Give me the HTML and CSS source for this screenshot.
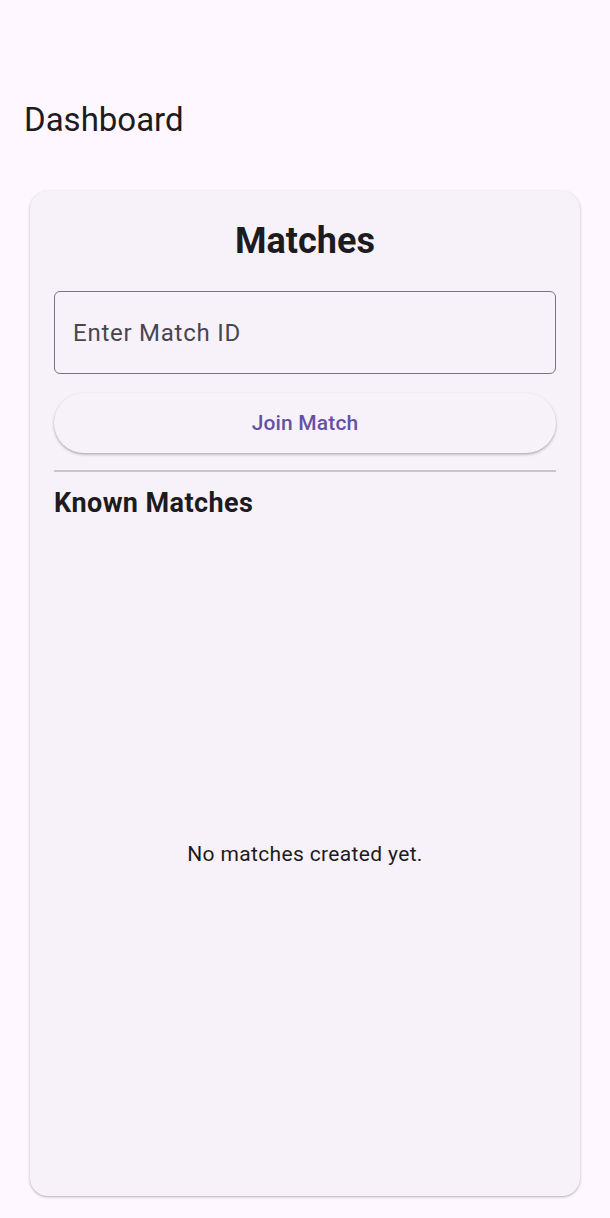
FILE: index.html
```html
<!DOCTYPE html>
<html>
<head>
<meta charset="utf-8">
<link rel="stylesheet" href="styles.css">
</head>
<body>
<div class="page">
  <header class="appbar"><h1 class="appbar-title">Dashboard</h1></header>
  <main class="content">
    <section class="card">
      <h2 class="card-title">Matches</h2>
      <div class="field"><span class="placeholder">Enter Match ID</span></div>
      <button class="join-btn">Join Match</button>
      <hr class="divider">
      <h3 class="section-title">Known Matches</h3>
      <div class="empty"><p class="empty-text">No matches created yet.</p></div>
    </section>
  </main>
</div>
</body>
</html>
```
FILE: styles.css
```css
* { box-sizing: border-box; }
html, body { margin: 0; padding: 0; }
body {
  background: #fef7ff;
  font-family: Roboto, "Liberation Sans", sans-serif;
  color: #1d1b20;
}
.page {
  width: 610px;
  height: 1218px;
  display: flex;
  flex-direction: column;
}
.appbar {
  margin-top: 71px;
  height: 96px;
  display: flex;
  align-items: center;
  padding: 0 24px;
}
.appbar-title {
  margin: 0;
  font-size: 33px;
  font-weight: 400;
  color: #1d1b20;
}
.content {
  flex: 1;
  padding: 24px 30px 22px 30px;
  display: flex;
}
.card {
  flex: 1;
  background: #f7f2fa;
  border-radius: 18px;
  box-shadow: 0 1px 3px rgba(0,0,0,0.22), 0 1px 2px rgba(0,0,0,0.1);
  padding: 24px 24px 24px 24px;
  display: flex;
  flex-direction: column;
}
.card-title {
  margin: 0;
  text-align: center;
  font-size: 36px;
  font-weight: 700;
  line-height: 52px;
  color: #1d1b20;
}
.field {
  margin-top: 24px;
  height: 83px;
  border: 1.5px solid #79747e;
  border-radius: 6px;
  display: flex;
  align-items: center;
  padding-left: 18px;
}
.placeholder {
  font-size: 24px;
  letter-spacing: 0.75px;
  color: #49454f;
}
.join-btn {
  margin-top: 19px;
  height: 60px;
  border: none;
  border-radius: 30px;
  background: #f7f2fa;
  box-shadow: 0 1.5px 3px rgba(0,0,0,0.25), 0 1px 2px rgba(0,0,0,0.08);
  font-family: Roboto, "Liberation Sans", sans-serif;
  font-size: 21px;
  font-weight: 500;
  letter-spacing: 0.15px;
  color: #6750a4;
}
.divider {
  margin: 17px 0 0 0;
  border: none;
  height: 1.5px;
  background: #cac4d0;
}
.section-title {
  margin: 14px 0 0 0;
  font-size: 27px;
  font-weight: 700;
  line-height: 34px;
  letter-spacing: 0.4px;
  color: #1d1b20;
}
.empty {
  flex: 1;
  display: flex;
  align-items: center;
  justify-content: center;
  padding-top: 16px;
}
.empty-text {
  margin: 0;
  font-size: 21px;
  letter-spacing: 0.35px;
  color: #1d1b20;
}
```
